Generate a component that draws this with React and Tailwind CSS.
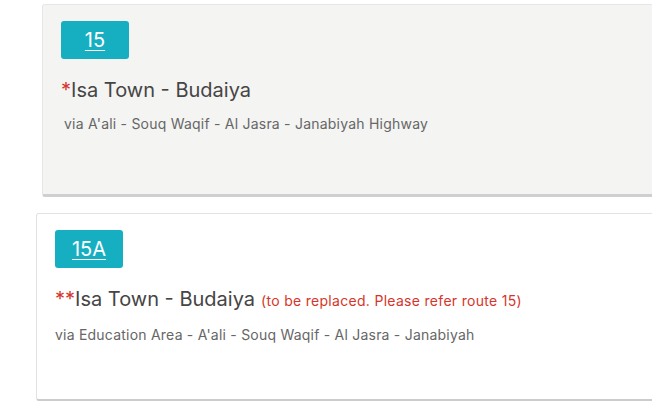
export default function App() {
  return (
    <div className="h-[407px] w-[652px] overflow-hidden bg-white" style={{ fontFamily: "Inter, 'Noto Sans', sans-serif" }}>
      <div className="pt-[4px]">
        <RouteCard
          className="ml-[42px] h-[193px] bg-[#f4f4f3] border border-[#e6e6e6] border-b-[3px] border-b-[#cfcfcf]"
          num="15"
          stars="*"
          subIndent="pl-[3px]"
          via="via A'ali - Souq Waqif - Al Jasra - Janabiyah Highway"
        />
      </div>
      <div className="pt-[16px]">
        <RouteCard
          className="ml-[36px] h-[188px] bg-white border border-[#e2e2e2] border-b-[2px] border-b-[#cccccc]"
          num="15A"
          stars="**"
          note="(to be replaced. Please refer route 15)"
          via="via Education Area - A'ali - Souq Waqif - Al Jasra - Janabiyah"
        />
      </div>
    </div>
  );
}

function RouteCard({ className, num, stars, note, via, subIndent = "" }) {
  return (
    <div className={"w-[640px] rounded-[3px] pl-[18px] pt-[16px] " + className}>
      <a
        href="#"
        className="inline-flex h-[38px] min-w-[68px] items-center justify-center rounded-[3px] bg-[#16afc2] px-[15px] text-[20px] text-white underline underline-offset-[3px] decoration-1"
      >
        {num}
      </a>
      <div className="mt-[18px] flex items-baseline text-[20px] leading-[26px] text-[#454545]">
        <span className="text-[#d6352b]">{stars}</span>
        <span>Isa Town - Budaiya</span>
        {note && <span className="ml-[6px] text-[14px] tracking-[0.3px] text-[#d6352b]">{note}</span>}
      </div>
      <div className={"mt-[11px] text-[14px] leading-[20px] tracking-[0.22px] text-[#666666] " + subIndent}>{via}</div>
    </div>
  );
}
